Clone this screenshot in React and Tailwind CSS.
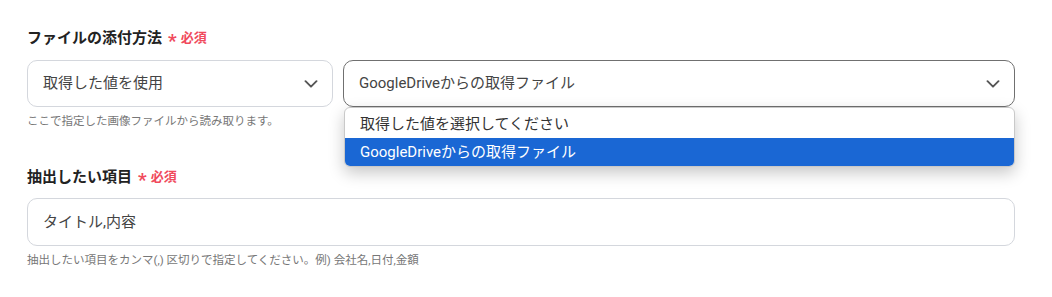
import React from 'react';

function Chevron() {
  return (
    <svg width="14" height="8" viewBox="0 0 14 8" fill="none" stroke="#555" strokeWidth="1.9" strokeLinecap="round" strokeLinejoin="round">
      <path d="M1.5 1.2l5.5 5.5 5.5-5.5" />
    </svg>
  );
}

function Label({ children }) {
  return (
    <div className="flex items-center gap-[6px] h-[20px]">
      <span className="text-[15px] font-bold text-[#222]">{children}</span>
      <span className="text-[#f04a5c] text-[13px] font-bold flex items-center gap-[4px]">
        <span className="text-[19px] leading-none mt-[5px]">*</span>
        <span>必須</span>
      </span>
    </div>
  );
}

export default function App() {
  return (
    <div
      className="bg-white w-[1052px] h-[297px] overflow-hidden px-[27px] pt-[28px]"
      style={{ fontFamily: 'Roboto, "Noto Sans CJK JP", sans-serif' }}
    >
      {/* ファイルの添付方法 */}
      <Label>ファイルの添付方法</Label>
      <div className="flex gap-[10px] mt-[12px] w-[988px]">
        <div className="w-[306px] h-[47px] border border-[#d4d7dd] rounded-[10px] flex items-center justify-between pl-[15px] pr-[14px]">
          <span className="text-[15px] text-[#444]">取得した値を使用</span>
          <Chevron />
        </div>
        <div className="relative flex-1">
          <div className="h-[47px] border border-[#707070] rounded-[10px] flex items-center justify-between pl-[15px] pr-[14px]">
            <span className="text-[15px] text-[#444]">GoogleDriveからの取得ファイル</span>
            <Chevron />
          </div>
          <div className="absolute z-10 left-[1px] right-0 top-[47px] bg-white border border-[#c9c9c9] rounded-[6px] overflow-hidden shadow-[0_6px_16px_rgba(0,0,0,0.22)] pt-[3px]">
            <div className="h-[27px] flex items-center pl-[15px] text-[15px] text-[#333]">取得した値を選択してください</div>
            <div className="h-[28px] flex items-center pl-[15px] text-[15px] text-white bg-[#1a67d4]">GoogleDriveからの取得ファイル</div>
          </div>
        </div>
      </div>
      <div className="text-[11.5px] text-[#777] mt-[6px] leading-[16px]">ここで指定した画像ファイルから読み取ります。</div>

      {/* 抽出したい項目 */}
      <div className="mt-[38px]">
        <Label>抽出したい項目</Label>
      </div>
      <div className="mt-[11px] w-[988px] h-[48px] border border-[#d4d7dd] rounded-[10px] flex items-center pl-[15px]">
        <span className="text-[15px] text-[#444]">タイトル,内容</span>
      </div>
      <div className="text-[11.5px] text-[#777] mt-[6px] leading-[16px]">抽出したい項目をカンマ(,) 区切りで指定してください。例) 会社名,日付,金額</div>
    </div>
  );
}
